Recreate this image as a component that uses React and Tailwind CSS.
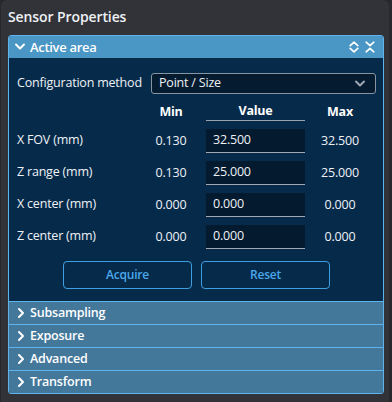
import { useState } from 'react'

const rows = [
  { label: 'X FOV (mm)', min: '0.130', value: '32.500', max: '32.500' },
  { label: 'Z range (mm)', min: '0.130', value: '25.000', max: '25.000' },
  { label: 'X center (mm)', min: '0.000', value: '0.000', max: '0.000' },
  { label: 'Z center (mm)', min: '0.000', value: '0.000', max: '0.000' },
]

const sections = ['Subsampling', 'Exposure', 'Advanced', 'Transform']

function Chevron({ dir = 'down', className = '' }) {
  const pts = {
    down: '2,3.5 6,7.5 10,3.5',
    up: '2,7.5 6,3.5 10,7.5',
    right: '4,2 8,6 4,10',
  }
  return (
    <svg viewBox="0 0 12 12" className={className} fill="none" stroke="currentColor" strokeWidth="2" strokeLinecap="round" strokeLinejoin="round">
      <polyline points={pts[dir]} />
    </svg>
  )
}

function ExpandIcon({ collapse }) {
  return (
    <svg viewBox="0 0 10 12" className="w-[10px] h-[12px]" fill="none" stroke="currentColor" strokeWidth="1.7" strokeLinecap="round" strokeLinejoin="round">
      {collapse ? (
        <>
          <polyline points="1.2,1.2 5,4.6 8.8,1.2" />
          <polyline points="1.2,10.8 5,7.4 8.8,10.8" />
        </>
      ) : (
        <>
          <polyline points="1.2,4.6 5,1.2 8.8,4.6" />
          <polyline points="1.2,7.4 5,10.8 8.8,7.4" />
        </>
      )}
    </svg>
  )
}

function App() {
  const [values, setValues] = useState(rows.map((r) => r.value))

  return (
    <div className="w-[392px] h-[402px] bg-[#26282b] overflow-hidden" style={{ fontFamily: '"Open Sans", "Noto Sans", sans-serif' }}>
      <div className="ml-[1px] w-[388px] h-full bg-[#313338] rounded-t-[6px] pl-[7px] pt-[6px]">
        <h1 className="text-[14px] leading-[22px] font-semibold text-[#eef1f4] tracking-[-0.1px]">Sensor Properties</h1>

        <div className="mt-[7px] w-[376px] border border-[#5db4ee] rounded-[3px] overflow-hidden">
          {/* open section */}
          <div className="h-[22px] bg-[#4a96c4] flex items-center pl-[5px] pr-[8px] text-white">
            <Chevron dir="down" className="w-[12px] h-[12px]" />
            <span className="ml-[4px] text-[13px] font-semibold leading-none tracking-[-0.3px]">Active area</span>
            <div className="ml-auto flex items-center gap-[6px]">
              <ExpandIcon />
              <ExpandIcon collapse />
            </div>
          </div>

          <div className="bg-[#062a4a] pl-[8px] pr-[7px] pt-[15px] pb-[12px] text-[#eef2f6] text-[12.5px] tracking-[-0.2px]">
            <div className="flex items-center">
              <span className="w-[134px] shrink-0 leading-none">Configuration method</span>
              <div className="flex-1 h-[21px] border border-[#8795a3] rounded-[3px] bg-[#051b30] flex items-center pl-[7px] pr-[9px]">
                <span className="leading-none">Point / Size</span>
                <Chevron dir="down" className="ml-auto w-[12px] h-[12px] text-[#9aa6b1]" />
              </div>
            </div>

            <div className="flex mt-[9px] h-[18px] font-bold text-white">
              <div className="w-[123px]" />
              <div className="w-[62px] text-center leading-[18px]">Min</div>
              <div className="w-[4px]" />
              <div className="w-[99px] text-center leading-[16px] border-b border-[#9aa3ad]">Value</div>
              <div className="w-[70px] text-center leading-[18px]">Max</div>
            </div>

            <div className="mt-[8px] flex flex-col gap-[8px]">
              {rows.map((r, i) => (
                <div key={r.label} className="flex items-center h-[24px]">
                  <div className="w-[123px] -mt-[2px]">{r.label}</div>
                  <div className="w-[62px] text-center mt-[1px]">{r.min}</div>
                  <div className="w-[4px]" />
                  <input
                    value={values[i]}
                    onChange={(e) => setValues(values.map((v, j) => (j === i ? e.target.value : v)))}
                    className="w-[99px] h-[24px] bg-[#041a2f] border-b border-[#a3a9af] pl-[7px] pb-[3px] text-[12.5px] text-[#eef2f6] outline-none tracking-[-0.2px]"
                  />
                  <div className="w-[70px] text-center mt-[1px]">{r.max}</div>
                </div>
              ))}
            </div>

            <div className="mt-[12px] flex justify-center gap-[9px]">
              <button className="w-[129px] h-[28px] rounded-[4px] border border-[#3f9fe0] text-[#4aa8ea] text-[12px] font-semibold">
                Acquire
              </button>
              <button className="w-[129px] h-[28px] rounded-[4px] border border-[#3f9fe0] text-[#4aa8ea] text-[12px] font-semibold">
                Reset
              </button>
            </div>
          </div>

          {sections.map((s) => (
            <div key={s} className="h-[23px] border-t border-[#5db4ee] bg-[#44789b] flex items-center pl-[6px] text-white">
              <Chevron dir="right" className="w-[12px] h-[12px]" />
              <span className="ml-[3px] text-[12.5px] font-semibold leading-none tracking-[-0.2px]">{s}</span>
            </div>
          ))}
        </div>
      </div>
    </div>
  )
}

export default App
